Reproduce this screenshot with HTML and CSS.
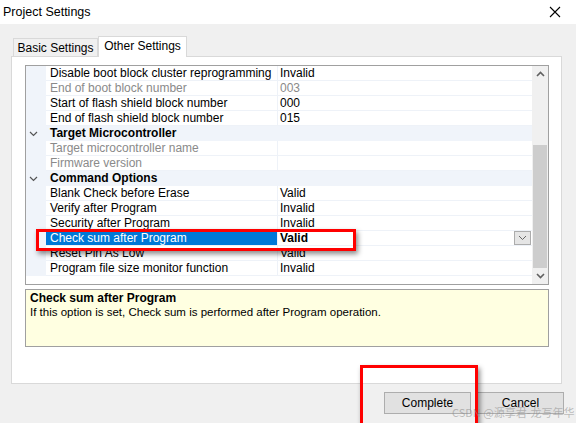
FILE: index.html
```html
<!DOCTYPE html>
<html>
<head>
<meta charset="utf-8">
<link rel="stylesheet" href="styles.css">
</head>
<body>
<div class="window">
  <div class="titlebar">
    <span class="title">Project Settings</span>
    <svg class="close" width="12" height="12" viewBox="0 0 12 12"><path d="M1 1L11 11M11 1L1 11" stroke="#000" stroke-width="1.1" fill="none"/></svg>
  </div>
  <div class="client">
    <div class="tabs">
      <div class="tab">Basic Settings</div>
      <div class="tab active">Other Settings</div>
    </div>
    <div class="panel">
      <div class="grid">
        <div class="rows">
          <div class="row"><div class="gut"></div><div class="name">Disable boot block cluster reprogramming</div><div class="val">Invalid</div></div>
          <div class="row dis"><div class="gut"></div><div class="name">End of boot block number</div><div class="val">003</div></div>
          <div class="row"><div class="gut"></div><div class="name">Start of flash shield block number</div><div class="val">000</div></div>
          <div class="row"><div class="gut"></div><div class="name">End of flash shield block number</div><div class="val">015</div></div>
          <div class="row cat"><div class="gut"><svg width="9" height="6" viewBox="0 0 9 6"><path d="M1 1L4.5 4.5L8 1" stroke="#555" stroke-width="1.2" fill="none"/></svg></div><div class="name">Target Microcontroller</div></div>
          <div class="row dis"><div class="gut"></div><div class="name">Target microcontroller name</div><div class="val"></div></div>
          <div class="row dis"><div class="gut"></div><div class="name">Firmware version</div><div class="val"></div></div>
          <div class="row cat"><div class="gut"><svg width="9" height="6" viewBox="0 0 9 6"><path d="M1 1L4.5 4.5L8 1" stroke="#555" stroke-width="1.2" fill="none"/></svg></div><div class="name">Command Options</div></div>
          <div class="row"><div class="gut"></div><div class="name">Blank Check before Erase</div><div class="val">Valid</div></div>
          <div class="row"><div class="gut"></div><div class="name">Verify after Program</div><div class="val">Invalid</div></div>
          <div class="row"><div class="gut"></div><div class="name">Security after Program</div><div class="val">Invalid</div></div>
          <div class="row sel"><div class="gut"></div><div class="name">Check sum after Program</div><div class="val"><span>Valid</span><span class="drop"><svg width="9" height="6" viewBox="0 0 9 6"><path d="M1 1L4.5 4.5L8 1" stroke="#666" stroke-width="1" fill="none"/></svg></span></div></div>
          <div class="row"><div class="gut"></div><div class="name">Reset Pin As Low</div><div class="val">Valid</div></div>
          <div class="row"><div class="gut"></div><div class="name">Program file size monitor function</div><div class="val">Invalid</div></div>
        </div>
        <div class="vscroll">
          <div class="arrow"><svg width="9" height="6" viewBox="0 0 9 6"><path d="M1 5L4.5 1.5L8 5" stroke="#606060" stroke-width="1.6" fill="none"/></svg></div>
          <div class="track"><div class="thumb"></div></div>
          <div class="arrow"><svg width="9" height="6" viewBox="0 0 9 6"><path d="M1 1L4.5 4.5L8 1" stroke="#606060" stroke-width="1.6" fill="none"/></svg></div>
        </div>
      </div>
      <div class="desc">
        <div class="desc-title">Check sum after Program</div>
        <div class="desc-text">If this option is set, Check sum is performed after Program operation.</div>
      </div>
    </div>
    <div class="buttons">
      <button class="btn">Complete</button>
      <button class="btn">Cancel</button>
    </div>
  </div>
  <div class="mark mark-row"></div>
  <div class="mark mark-btn"></div>
  <div class="watermark">CSDN @源享君-龙写年华</div>
</div>
</body>
</html>
```
FILE: styles.css
```css
* { box-sizing: border-box; }
html, body { margin: 0; padding: 0; }
body {
  width: 576px; height: 423px; overflow: hidden;
  font-family: "Liberation Sans", Arial, "Noto Sans CJK JP", sans-serif;
  font-size: 12px; color: #000;
}
.window { position: relative; width: 576px; height: 423px; background: #f0f0f0; }
.titlebar {
  height: 24px; background: #fff; display: flex; align-items: center;
  justify-content: space-between; padding: 0 15px 0 3px;
}
.title { font-size: 12.5px; }
.client { padding: 12px 14px 0 11px; display: flex; flex-direction: column; }
.tabs { display: flex; padding-left: 2px; height: 20px; align-items: flex-end; }
.tab {
  height: 18px; border: 1px solid #d9d9d9; border-bottom: none;
  background: #f0f0f0; line-height: 18px; width: 85px; white-space: nowrap;
  text-align: center;
}
.tab.active { height: 21px; line-height: 19px; background: #fff; width: 89px; margin-bottom: -1px; position: relative; z-index: 1; }
.panel {
  height: 328px; background: #fff; border: 1px solid #d9d9d9;
  padding: 8px 12px 0 13px;
}
.grid { height: 220px; border: 1px solid #a0a0a0; display: flex; }
.rows { flex: 1; }
.row { display: flex; height: 15px; line-height: 15px; }
.gut { width: 20px; background: #f0f4fa; display: flex; align-items: center; justify-content: center; padding-right: 6px; }
.name { width: 232px; padding-left: 4px; white-space: nowrap; border-bottom: 1px solid #eef2f8; border-right: 1px solid #eef2f8; line-height: 15px; }
.val { flex: 1; padding-left: 2px; border-bottom: 1px solid #eef2f8; display: flex; justify-content: space-between; line-height: 15px; }
.row.dis .name, .row.dis .val { color: #8a8a8a; }
.row.cat { background: #f0f4fa; }
.row.cat .name { font-weight: bold; border: none; }
.row.sel .name { background: #0078d7; color: #fff; }
.row.sel .val span:first-child { font-weight: bold; }
.drop {
  width: 17px; height: 14px; border: 1px solid #acacac; background: #e5e5e5;
  display: flex; align-items: center; justify-content: center; margin: 0 1px 0 0;
}
.vscroll { width: 16px; background: #f0f0f0; display: flex; flex-direction: column; }
.arrow { height: 17px; display: flex; align-items: center; justify-content: center; }
.track { flex: 1; padding-top: 62px; padding-bottom: 0; }
.thumb { height: 123px; background: #cdcdcd; margin: 0 1px; }
.desc {
  margin-top: 4px; height: 58px; background: #ffffe1; border: 1px solid #a0a0a0;
  padding: 1px 4px;
}
.desc-title { font-weight: bold; line-height: 14px; }
.desc-text { line-height: 14px; font-size: 11.5px; }
.buttons { display: flex; justify-content: flex-end; gap: 6px; margin-top: 8px; margin-right: -2px; }
.btn {
  width: 87px; height: 22px; background: #e1e1e1; border: 1px solid #adadad;
  font-family: inherit; font-size: 12px; padding: 0; color: #000;
}
.mark { position: absolute; border: 3px solid #ff0000; box-shadow: 2px 3px 5px rgba(0,0,0,0.45); }
.mark-row { left: 36px; top: 229px; width: 320px; height: 22px; }
.mark-btn { left: 360px; top: 365px; width: 118px; height: 62px; }
.watermark {
  position: absolute; left: 452px; top: 404px; font-size: 11px;
  color: rgba(140,140,140,0.55); font-family: "Noto Sans CJK SC", sans-serif;
}
```
